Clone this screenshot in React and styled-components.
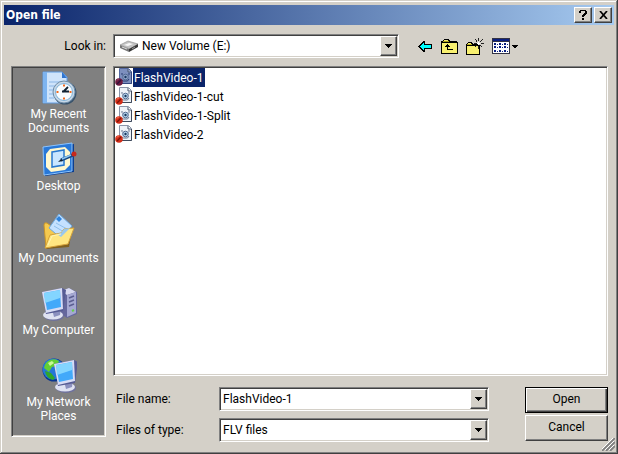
import styled, { createGlobalStyle, css } from "styled-components";

const GlobalStyle = createGlobalStyle`
  * {
    box-sizing: border-box;
  }
  body {
    margin: 0;
    background: #d4d0c8;
    color: #000;
    font: 12px/14px Roboto, "Liberation Sans", sans-serif;
  }
  button, input, select {
    font: inherit;
    color: inherit;
  }
`;

const sunken = css`
  border: 1px solid;
  border-color: #808080 #fff #fff #808080;
  box-shadow: inset 1px 1px #404040, inset -1px -1px #d4d0c8;
`;
const raised = css`
  border: 1px solid;
  border-color: #fff #404040 #404040 #fff;
  box-shadow: inset -1px -1px #808080;
  background: #d4d0c8;
`;

const Window = styled.form`
  min-height: 100vh;
  padding: 5px 4px 4px;
  background: #d4d0c8;
  box-shadow: inset -1px -1px #404040, inset 1px 1px #d4d0c8, inset -2px -2px #808080, inset 2px 2px #fff;
  position: relative;
`;
const TitleBar = styled.header`
  height: 20px;
  padding: 0 2px;
  display: flex;
  align-items: center;
  background: linear-gradient(90deg, #0a246a, #a6caf0);
`;
const Title = styled.h1`
  margin: 0;
  flex: 1;
  color: #fff;
  font: bold 12px/14px "DejaVu Sans Condensed", "DejaVu Sans", sans-serif;
`;
const TitleButton = styled.button`
  ${raised}
  width: 18px;
  height: 16px;
  margin-left: ${({ $gap }) => ($gap ? 2 : 0)}px;
  padding: 0;
  display: grid;
  place-items: center;
`;
const Body = styled.div`
  padding: 9px 6px 8px 7px;
  display: grid;
  grid-template-columns: 95px minmax(0, 1fr);
  column-gap: 7px;
  row-gap: 8px;
`;
const LookLabel = styled.label`
  align-self: center;
  text-align: right;
`;
const LookRow = styled.div`
  display: grid;
  grid-template-columns: minmax(0, 286px) auto;
  justify-content: start;
  column-gap: 17px;
  align-items: center;
`;
const Combo = styled.div`
  ${sunken}
  height: 24px;
  padding: 1px;
  display: flex;
  align-items: center;
  background: #fff;
  position: relative;
  & > svg {
    margin-left: 5px;
  }
`;
const Select = styled.select`
  appearance: none;
  flex: 1;
  min-width: 0;
  height: 20px;
  border: 0;
  padding: 0 20px 0 ${({ $indent }) => $indent || 2}px;
  background: transparent;
  outline: none;
`;
const TextInput = styled.input`
  flex: 1;
  min-width: 0;
  height: 20px;
  border: 0;
  padding: 0 2px;
  background: transparent;
  outline: none;
`;
const DropArrow = styled.span`
  ${raised}
  position: absolute;
  top: 1px;
  right: 1px;
  bottom: 1px;
  width: 17px;
  display: grid;
  place-items: center;
  pointer-events: none;
`;
const Tools = styled.div`
  display: flex;
  gap: 4px;
`;
const ToolButton = styled.button`
  height: 22px;
  padding: 0 2px;
  border: 0;
  background: none;
  display: grid;
  place-items: center;
`;
const Places = styled.nav`
  ${sunken}
  margin-bottom: 5px;
  padding: 3px 1px;
  background: #808080;
`;
const Place = styled.a`
  height: 72px;
  display: flex;
  flex-direction: column;
  align-items: center;
  color: #fff;
  text-align: center;
  text-decoration: none;
  white-space: pre-line;
  & > svg {
    flex: none;
    margin-bottom: 1px;
  }
`;
const Content = styled.div`
  display: flex;
  flex-direction: column;
  gap: 11px;
`;
const FileList = styled.ul`
  ${sunken}
  height: 310px;
  margin: 0;
  padding: 1px;
  list-style: none;
  background: #fff;
`;
const FileItem = styled.li`
  height: 19px;
  display: flex;
`;
const FileName = styled.span`
  height: 19px;
  padding: 3px 2px 2px 1px;
  color: ${({ $selected }) => ($selected ? "#fff" : "#000")};
  background: ${({ $selected }) => ($selected ? "#0a246a" : "transparent")};
`;
const Footer = styled.div`
  display: grid;
  grid-template-columns: minmax(0, 1fr) 83px;
  column-gap: 36px;
  align-items: start;
`;
const Fields = styled.div`
  display: grid;
  grid-template-columns: 103px minmax(0, 1fr);
  row-gap: 7px;
  align-items: center;
  padding-left: 3px;
`;
const Actions = styled.div`
  display: grid;
  row-gap: 2px;
`;
const ActionButton = styled.button`
  ${raised}
  height: 26px;
  padding: 0 0 2px;
  outline: ${({ $primary }) => ($primary ? "1px solid #000" : "none")};
  outline-offset: -1px;
  ${({ $primary }) =>
    $primary && "box-shadow: inset 1px 1px #fff, inset -1px -1px #404040, inset -2px -2px #808080;"}
`;
const Grip = styled.svg`
  position: absolute;
  right: 3px;
  bottom: 3px;
`;

const ArrowDown = () => (
  <svg width="7" height="4" shapeRendering="crispEdges">
    <path d="M0 0h7v1H0zM1 1h5v1H1zM2 2h3v1H2zM3 3h1v1H3z" />
  </svg>
);

const DriveIcon = () => (
  <svg width="18" height="16" viewBox="0 0 18 16">
    <path d="M0 7 8 3l10 3-8 5z" fill="#c4c4c4" stroke="#888" strokeWidth=".6" />
    <path d="M0 7v3l9 4v-3z" fill="#777" />
    <path d="m9 11 9-5v3l-9 5z" fill="#383838" />
    <path d="m4 7 5-2 4 1-5 2z" fill="#f7f7f7" />
    <path d="m2 9 5 2" stroke="#ddd" />
    <path d="m12 11 3-2" stroke="#999" />
  </svg>
);

const BackIcon = () => (
  <svg width="15" height="12" shapeRendering="crispEdges">
    <path d="M0 6h1V5h1V4h1V3h1V2h1V1h2v3h7v5H7v3H5v-1H4v-1H3V9H2V8H1V7H0z" />
    <path d="M2 6h1V5h1V4h1V3h1v2h7v3H6v2H5V9H4V8H3V7H2z" fill="#0ff" />
  </svg>
);

const UpIcon = () => (
  <svg width="17" height="15" shapeRendering="crispEdges">
    <path d="M1 2h1V1h1V0h5v1h1v1h7v1h1v12H0V2z" />
    <path d="M1 4h15v10H1zM3 1h4v1H3z" fill="#f8f070" />
    <path d="M2 2h6v1H2z" fill="#a8a018" />
    <path d="M6 5h1v1h1v1h1v1H7v2h5v1H6V8H4V7h1V6h1z" />
  </svg>
);

const NewFolderIcon = () => (
  <svg width="18" height="17" shapeRendering="crispEdges">
    <path d="M0 6h1V5h1V4h4v1h1v1h6v1h1v10H0z" />
    <path d="M1 8h12v8H1zM2 5h3v1H2z" fill="#f8f070" />
    <path d="M1 6h5v1H1z" fill="#b8b020" />
    <path
      d="M12 0h1v3h-1zM12 8h1v3h-1zM8 5h3v1H8zM15 5h3v1h-3zM9 1h1v1H9zM10 2h1v2h-1zM15 2h1v1h-1zM14 3h1v1h-1zM16 1h1v1h-1zM14 7h1v1h-1zM15 8h1v1h-1zM10 7h1v1h-1zM9 8h1v1H9z"
      fill="#222"
    />
    <path d="M12 4h1v3h-1zM11 5h3v1h-3z" fill="#fff" />
  </svg>
);

const ViewIcon = () => (
  <svg width="26" height="16" shapeRendering="crispEdges">
    <path d="M0 0h18v16H0z" fill="#334" />
    <path d="M1 1h16v2H1z" fill="#0a1f80" />
    <path d="M1 4h16v11H1z" fill="#fff" />
    {[3, 8, 13].map((x) =>
      [5, 8, 12].map((y) => (
        <path key={`${x}-${y}`} d={`M${x - 1} ${y}h2v2h-2zM${x + 2} ${y + 1}h1v1h-1z`} fill="#0a1f80" />
      ))
    )}
    <path d="M20 7h6v1h-6zM21 8h4v1h-4zM22 9h2v1h-2z" />
  </svg>
);

const FileIcon = ({ selected }) => (
  <svg width="18" height="18" viewBox="0 0 18 18">
    <path
      d="M4.5.5h9l3 3v12h-12z"
      fill={selected ? "#7d8fbe" : "#eef2f8"}
      stroke={selected ? "#53679f" : "#8994a8"}
    />
    <path d="M13 1v3h3" fill={selected ? "#a9b8df" : "#fff"} stroke="#49566e" />
    <path d="M16.5 4v11.5H6" fill="none" stroke={selected ? "#33477f" : "#3f4a5c"} />
    <path d="M7 5v1.5l1 1M14 5v1.5l-1 1M7 12l1.5 1h4L14 11" fill="none" stroke={selected ? "#27386f" : "#63748f"} />
    <circle cx="10.5" cy="9" r="2.8" fill={selected ? "#93a5cf" : "#b7d4ec"} stroke="#536b91" />
    <circle cx="10.5" cy="9" r="1.2" fill="#17375e" />
    <circle cx="4" cy="14" r="3.8" fill={selected ? "#6b1a40" : "#d32d18"} />
    <path d="m2 16 4-4" stroke={selected ? "#301039" : "#7c1408"} strokeWidth="1.2" />
    <path d="M2 12.5 3.5 11" stroke={selected ? "#a05072" : "#ff8a68"} />
  </svg>
);

const RecentIcon = () => (
  <svg width="36" height="36" viewBox="0 0 36 36">
    <path d="M2 2h19l5 5v26H2z" fill="#cfe4fb" stroke="#5f9be2" />
    <path d="M2 2h4v31H2z" fill="#7db4f0" />
    <path d="M21 2v6h5z" fill="#2e74cf" />
    <path d="M8 12h14M8 16h8M8 20h5M8 24h4M8 28h5" stroke="#8bb6e6" />
    <circle cx="24" cy="23" r="11.5" fill="#39536c" />
    <circle cx="23" cy="22" r="11" fill="#c7d8e8" stroke="#6f8da8" />
    <circle cx="23" cy="22" r="8.500" fill="#f8fcff" stroke="#7fb2d8" />
    <path d="M23 14.500v2M23 27.500v2M15.500 22h2M28.500 22h2" stroke="#f06a20" strokeWidth="2" />
    <path d="m22 22 5-5M21 21.500h7" stroke="#123" strokeWidth="1.800" />
  </svg>
);

const DesktopIcon = () => (
  <svg width="36" height="36" viewBox="0 0 36 36">
    <path d="m3 6 30-4v28L4 34z" fill="#0c3f91" />
    <path d="m2 5 29-4v28L3 33z" fill="#2878d8" stroke="#8bc4ff" />
    <path d="m9 7 15-2 5 5v13l-5 5-14 2-5-5V12z" fill="#fff8cf" />
    <path d="m11 10 12-2v15l-12 2z" fill="#c8e6ff" stroke="#2778cf" strokeWidth="1.500" />
    <path d="m20 18 12-5" stroke="#174683" strokeWidth="3" />
    <path d="m21 17 9-4" stroke="#8bc6f1" strokeWidth="1.500" />
    <circle cx="33" cy="12" r="2.500" fill="#c6281c" />
    <path d="m17 20 3-3 2 2z" fill="#123" />
  </svg>
);

const DocumentsIcon = () => (
  <svg width="36" height="36" viewBox="0 0 36 36">
    <path d="M4 14q0-3 3-2l4 2 20 2-3 17-23 2z" fill="#80601f" />
    <path d="M3 11q0-3 3-2l4 3 9-2 1 20-15 4z" fill="#f5c94f" stroke="#c8952b" />
    <path d="M18 0 31 12 21 25 8 14z" fill="#c4e1ff" stroke="#6ea9df" />
    <path d="m18 2 3 3-3 3-3-3z" fill="#2e84df" />
    <path d="m13 12 10 6M15 9l11 6" stroke="#8ebfec" />
    <path d="m4 34 5-13 11-2 3-4 10-1-6 16z" fill="#ffe681" stroke="#d5a23a" />
    <path d="m16 20 4-1 3-4 6-1-9 9z" fill="#9ac8ed" />
    <path d="m7 31 4-9 9-2" fill="none" stroke="#fff5b5" />
  </svg>
);

const Monitor = ({ x = 0, y = 0 }) => (
  <g transform={`translate(${x} ${y})`}>
    <ellipse cx="12" cy="29" rx="10" ry="5" fill="#6e719d" />
    <ellipse cx="11" cy="28" rx="10" ry="4.500" fill="#dfe2f2" />
    <path d="m10 22 9-2-1 8-6 2z" fill="#8b90bf" />
    <path d="m0 5 20-4 4 2-3 21-17 3z" fill="#565b94" />
    <path d="m0 5 20-4 1 21-17 4z" fill="#d7dcf5" />
    <path d="m2 6 16-3 1 17-14 3z" fill="#42a9fa" />
    <path d="m2 6 16-3v8L3 16z" fill="#83d5ff" />
  </g>
);

const ComputerIcon = () => (
  <svg width="36" height="36" viewBox="0 0 36 36">
    <path d="m20 5 8-3 8 4v22l-10 4-6-4z" fill="#65679d" />
    <path d="m20 5 8-3 7 4-9 3z" fill="#d9daf0" />
    <path d="m26 9 9-3v21l-9 4z" fill="#a5a8d2" />
    <path d="m28 12 5-2M28 16l5-2M28 20l5-2" stroke="#5b5e91" strokeWidth="1.500" />
    <path d="m31 25 2-1" stroke="#65cf45" strokeWidth="2" />
    <Monitor x={1} y={1} />
  </svg>
);

const NetworkIcon = () => (
  <svg width="36" height="36" viewBox="0 0 36 36">
    <circle cx="13" cy="12" r="11.500" fill="#0a3690" />
    <circle cx="12" cy="11" r="10.500" fill="#2476d8" />
    <path d="M9 2q5-2 9 1l-2 5-5 1-3 5-5-4q1-6 6-8z" fill="#63cf35" />
    <path d="m4 13 6 2 4 5-2 2q-7-2-8-9z" fill="#30a62c" />
    <path d="m7 5 4-2 2 2-4 3z" fill="#c8f797" />
    <Monitor x={13} y={1} />
  </svg>
);

const places = [
  { name: "My Recent\nDocuments", Icon: RecentIcon },
  { name: "Desktop", Icon: DesktopIcon },
  { name: "My Documents", Icon: DocumentsIcon },
  { name: "My Computer", Icon: ComputerIcon },
  { name: "My Network\nPlaces", Icon: NetworkIcon },
];
const files = ["FlashVideo-1", "FlashVideo-1-cut", "FlashVideo-1-Split", "FlashVideo-2"];

const App = () => (
  <>
    <GlobalStyle />
    <Window onSubmit={(e) => e.preventDefault()}>
      <TitleBar>
        <Title>Open file</Title>
        <TitleButton type="button">
          <svg width="8" height="10" shapeRendering="crispEdges">
            <path d="M1 0h6v1h1v3H7v1H6v1H5v1H3V5h1V4h1V3h1V1H2v2H0V1h1zM3 8h2v2H3z" />
          </svg>
        </TitleButton>
        <TitleButton type="button" $gap>
          <svg width="9" height="8" viewBox="0 0 9 8">
            <path d="m1 0 7 8M8 0 1 8" stroke="#000" strokeWidth="1.700" />
          </svg>
        </TitleButton>
      </TitleBar>
      <Body>
        <LookLabel htmlFor="look">Look in:</LookLabel>
        <LookRow>
          <Combo>
            <DriveIcon />
            <Select id="look" $indent={4}>
              <option>New Volume (E:)</option>
            </Select>
            <DropArrow>
              <ArrowDown />
            </DropArrow>
          </Combo>
          <Tools>
            {[BackIcon, UpIcon, NewFolderIcon, ViewIcon].map((Icon, i) => (
              <ToolButton key={i} type="button">
                <Icon />
              </ToolButton>
            ))}
          </Tools>
        </LookRow>
        <Places>
          {places.map(({ name, Icon }) => (
            <Place key={name} href="#">
              <Icon />
              {name}
            </Place>
          ))}
        </Places>
        <Content>
          <FileList>
            {files.map((file, i) => (
              <FileItem key={file}>
                <FileIcon selected={i === 0} />
                <FileName $selected={i === 0}>{file}</FileName>
              </FileItem>
            ))}
          </FileList>
          <Footer>
            <Fields>
              <label htmlFor="name">File name:</label>
              <Combo>
                <TextInput id="name" defaultValue="FlashVideo-1" />
                <DropArrow>
                  <ArrowDown />
                </DropArrow>
              </Combo>
              <label htmlFor="type">Files of type:</label>
              <Combo>
                <Select id="type">
                  <option>FLV files</option>
                </Select>
                <DropArrow>
                  <ArrowDown />
                </DropArrow>
              </Combo>
            </Fields>
            <Actions>
              <ActionButton type="submit" $primary>
                Open
              </ActionButton>
              <ActionButton type="button">Cancel</ActionButton>
            </Actions>
          </Footer>
        </Content>
      </Body>
      <Grip width="13" height="13">
        <path d="M0 13 13 0M4 13l9-9M8 13l5-5" stroke="#808080" strokeWidth="1.800" />
        <path d="m-1 12L12-1M3 12l9-9M7 12l5-5" stroke="#fff" />
      </Grip>
    </Window>
  </>
);

export default App;
